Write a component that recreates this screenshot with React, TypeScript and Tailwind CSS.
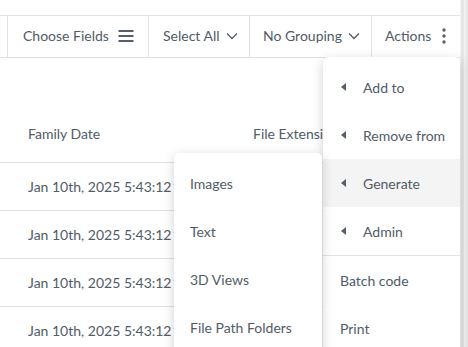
import React from "react";

const txt = "text-[#515b66]";

function Hamburger() {
  return (
    <svg width="16" height="14" viewBox="0 0 16 14" className="ml-[9px]">
      <path d="M0.5 2h15M0.5 7h15M0.5 12h15" stroke="#55606b" strokeWidth="1.8" />
    </svg>
  );
}

function Chevron() {
  return (
    <svg width="12" height="8" viewBox="0 0 12 8" className="ml-[6px]">
      <path d="M1 1.5l5 5 5-5" stroke="#55606b" strokeWidth="1.4" fill="none" />
    </svg>
  );
}

function Dots() {
  return (
    <svg width="4" height="16" viewBox="0 0 4 16" className="ml-[11px]">
      <circle cx="2" cy="2" r="1.7" fill="#55606b" />
      <circle cx="2" cy="8" r="1.7" fill="#55606b" />
      <circle cx="2" cy="14" r="1.7" fill="#55606b" />
    </svg>
  );
}

function Tri() {
  return (
    <svg width="5" height="8" viewBox="0 0 5 8" className="ml-[18px] mr-[17px]">
      <path d="M5 0v8L0 4z" fill="#55606b" />
    </svg>
  );
}

export default function App() {
  const rows = [0, 1, 2, 3];
  return (
    <div
      className="relative w-[468px] h-[347px] overflow-hidden bg-white flex text-[14px]"
      style={{ fontFamily: "Lato, 'Open Sans', sans-serif" }}
    >
      <div className="flex-1 flex flex-col pt-[15px]">
        {/* toolbar */}
        <div className={`flex shrink-0 h-[43px] border-y border-[#e2e2e2] ${txt}`}>
          <div className="w-[8px] border-r border-[#e2e2e2]" />
          <div className="w-[141px] flex items-center pb-[2px] pl-[15px] border-r border-[#e2e2e2]">
            Choose Fields
            <Hamburger />
          </div>
          <div className="w-[101px] flex items-center pb-[2px] pl-[14px] border-r border-[#e2e2e2]">
            Select All
            <Chevron />
          </div>
          <div className="w-[122px] flex items-center pb-[2px] pl-[13px] border-r border-[#e2e2e2]">
            No Grouping
            <Chevron />
          </div>
          <div className="flex-1 flex items-center pb-[2px] pl-[13px]">
            Actions
            <Dots />
          </div>
        </div>
        <div className="h-[52px] shrink-0" />
        {/* header */}
        <div className={`flex shrink-0 h-[53px] items-center pb-[6px] border-b border-[#e2e2e2] ${txt}`}>
          <div className="w-[253px] pl-[28px]">Family Date</div>
          <div className="w-[70px] overflow-hidden whitespace-nowrap">File Extension</div>
        </div>
        {rows.map((r) => (
          <div
            key={r}
            className={`flex h-[48px] shrink-0 items-center border-b border-[#e2e2e2] ${txt}`}
          >
            <div className="ml-[28px] w-[146px] overflow-hidden whitespace-nowrap">Jan 10th, 2025 5:43:12 PM</div>
          </div>
        ))}
      </div>
      <div className="w-[8px] bg-[#e6e6e6] border-l border-[#f4f4f4] flex justify-center">
        <div className="w-[2px] bg-[#f1f1f1]" />
      </div>

      {/* Actions menu */}
      <div className={`absolute left-[323px] top-[57px] w-[137px] h-[310px] bg-white rounded-[5px] shadow-[0_3px_12px_rgba(0,0,0,0.18)] pt-[6px] ${txt}`}>
        {["Add to", "Remove from", "Generate", "Admin"].map((t) => (
          <div
            key={t}
            className={`h-[48px] flex items-center whitespace-nowrap ${t === "Generate" ? "bg-[#f4f4f4]" : ""}`}
          >
            <Tri />
            {t}
          </div>
        ))}
        <div className="h-px bg-[#e2e2e2]" />
        <div className="h-[48px] flex items-center pl-[17px]">Batch code</div>
        <div className="h-[48px] flex items-center pl-[17px]">Print</div>
      </div>

      {/* Submenu */}
      <div className={`absolute left-[174px] top-[153px] w-[148px] h-[220px] bg-white rounded-[5px] shadow-[0_3px_12px_rgba(0,0,0,0.18)] pt-[6px] ${txt}`}>
        {["Images", "Text", "3D Views", "File Path Folders"].map((t) => (
          <div key={t} className="h-[48px] flex items-center pl-[16px] whitespace-nowrap">
            {t}
          </div>
        ))}
      </div>
    </div>
  );
}
